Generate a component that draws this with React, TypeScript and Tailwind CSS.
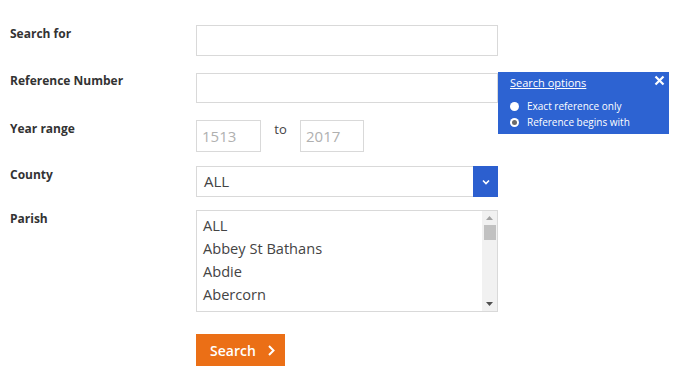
import React from "react";

export default function App() {
  const label = "text-[12px] font-bold text-[#333] leading-[18px] w-[186px] shrink-0";
  const input = "h-[31px] w-[302px] border border-[#d9d9d9] bg-white";
  return (
    <div className="relative w-[680px] h-[372px] bg-white" style={{ fontFamily: '"Open Sans", sans-serif' }}>
      <div className="flex flex-col pl-[10px] pt-[25px]">
        <div className="flex">
          <div className={label}>Search for</div>
          <div className={input}></div>
        </div>
        <div className="flex mt-[17px]">
          <div className={label + " -mt-[1px]"}>Reference Number</div>
          <div className="h-[30px] w-[302px] border border-[#d9d9d9] bg-white"></div>
        </div>
        <div className="flex mt-[17px] items-start">
          <div className={label}>Year range</div>
          <div className="h-[32px] w-[65px] border border-[#d9d9d9] text-[15px] text-[#b0b0b0] pl-[5px] leading-[30px]">1513</div>
          <div className="w-[39px] text-[13px] text-[#444] text-center leading-[18px]">to</div>
          <div className="h-[32px] w-[64px] border border-[#d9d9d9] text-[15px] text-[#b0b0b0] pl-[5px] leading-[30px]">2017</div>
        </div>
        <div className="flex mt-[14px]">
          <div className={label}>County</div>
          <div className="h-[31px] w-[302px] border border-[#d9d9d9] flex">
            <div className="flex-1 text-[15px] text-[#444] pl-[7px] leading-[29px]">ALL</div>
            <div className="w-[25px] h-[31px] -mt-[1px] -mr-[1px] bg-[#2c5fcf] flex items-center justify-center">
              <svg width="8" height="6" viewBox="0 0 8 6"><path d="M1 1.5 L4 4.5 L7 1.5" stroke="white" strokeWidth="1.6" fill="none" /></svg>
            </div>
          </div>
        </div>
        <div className="flex mt-[13px]">
          <div className={label}>Parish</div>
          <div className="h-[102px] w-[302px] border border-[#d9d9d9] flex">
            <div className="flex-1 pl-[6px] pt-[3px] text-[14.6px] text-[#444] leading-[23px]">
              <div>ALL</div>
              <div>Abbey St Bathans</div>
              <div>Abdie</div>
              <div>Abercorn</div>
            </div>
            <div className="w-[15px] bg-[#f1f1f1] flex flex-col items-center">
              <svg className="mt-[5px]" width="7" height="4" viewBox="0 0 7 4"><path d="M0 4 L3.5 0 L7 4 Z" fill="#a3a3a3" /></svg>
              <div className="mt-[5px] w-[12px] h-[15px] bg-[#c1c1c1]"></div>
              <div className="flex-1"></div>
              <svg className="mb-[5px]" width="7" height="4" viewBox="0 0 7 4"><path d="M0 0 L3.5 4 L7 0 Z" fill="#505050" /></svg>
            </div>
          </div>
        </div>
        <div className="flex mt-[22px]">
          <div className="w-[186px] shrink-0"></div>
          <div className="h-[32px] w-[89px] bg-[#eb6f16] flex items-center pl-[14px] gap-[12px] text-white text-[14px] font-semibold">
            <span>Search</span>
            <svg width="7" height="11" viewBox="0 0 7 11"><path d="M1 1 L5.5 5.5 L1 10" stroke="white" strokeWidth="2" fill="none" /></svg>
          </div>
        </div>
      </div>
      <div className="absolute left-[498px] top-[72px] w-[171px] h-[62px] bg-[#2d63d2] text-white">
        <div className="absolute left-[12px] top-[3px] text-[11px] font-medium underline leading-[16px]">Search options</div>
        <svg className="absolute right-[4px] top-[3px]" width="11" height="11" viewBox="0 0 11 11"><path d="M1.5 1.5 L9.5 9.5 M9.5 1.5 L1.5 9.5" stroke="white" strokeWidth="2.2" /></svg>
        <div className="absolute left-[12px] top-[27px] flex flex-col gap-[2px] text-[10px] leading-[14px]">
          <div className="flex items-center gap-[8px]">
            <span className="w-[9px] h-[9px] rounded-full bg-white inline-block"></span>
            <span>Exact reference only</span>
          </div>
          <div className="flex items-center gap-[8px]">
            <span className="w-[9px] h-[9px] rounded-full bg-white inline-flex items-center justify-center"><span className="w-[5px] h-[5px] rounded-full bg-[#6b6b6b]"></span></span>
            <span>Reference begins with</span>
          </div>
        </div>
      </div>
    </div>
  );
}
